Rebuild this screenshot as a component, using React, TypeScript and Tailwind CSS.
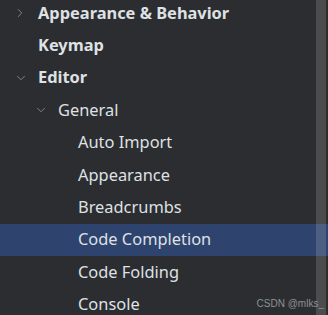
import { ChevronRight, ChevronDown } from "lucide-react";

type Item = {
  label: string;
  depth: number;
  bold?: boolean;
  arrow?: "right" | "down";
  selected?: boolean;
};

const items: Item[] = [
  { label: "Appearance & Behavior", depth: 0, bold: true, arrow: "right" },
  { label: "Keymap", depth: 0, bold: true },
  { label: "Editor", depth: 0, bold: true, arrow: "down" },
  { label: "General", depth: 1, arrow: "down" },
  { label: "Auto Import", depth: 2 },
  { label: "Appearance", depth: 2 },
  { label: "Breadcrumbs", depth: 2 },
  { label: "Code Completion", depth: 2, selected: true },
  { label: "Code Folding", depth: 2 },
  { label: "Console", depth: 2 },
];

const pad = ["pl-[38px]", "pl-[58px]", "pl-[78px]"];

export default function App() {
  return (
    <div
      className="relative w-[328px] h-[315px] overflow-hidden bg-[#2b2d30] text-[#dfe1e5]"
      style={{ fontFamily: '"Noto Sans", "Open Sans", sans-serif' }}
    >
      <div className="flex flex-col -mt-[3.2px]">
        {items.map((it) => (
          <div
            key={it.label}
            className={`relative flex items-center h-[32.4px] shrink-0 text-[16.4px] ${pad[it.depth]} ${
              it.selected ? "bg-[#2e436e]" : ""
            } ${it.bold ? "font-bold" : ""}`}
          >
            {it.arrow === "right" && (
              <ChevronRight
                size={14}
                strokeWidth={1.5}
                className="absolute left-[13px] text-[#8c8e92]"
              />
            )}
            {it.arrow === "down" && (
              <ChevronDown
                size={14}
                strokeWidth={1.5}
                className={`absolute text-[#8c8e92] ${it.depth === 0 ? "left-[14px]" : "left-[34px]"}`}
              />
            )}
            <span className="whitespace-nowrap">{it.label}</span>
          </div>
        ))}
      </div>
      <div className="absolute top-0 bottom-0 left-[316px] w-[10px] bg-white/15" />
      <div
        className="absolute right-[4px] top-[297px] whitespace-nowrap text-[10px] leading-[13px] text-[#8f9194]"
        style={{ fontFamily: '"Liberation Sans", Arial, sans-serif' }}
      >
        CSDN @mlks_
      </div>
    </div>
  );
}
